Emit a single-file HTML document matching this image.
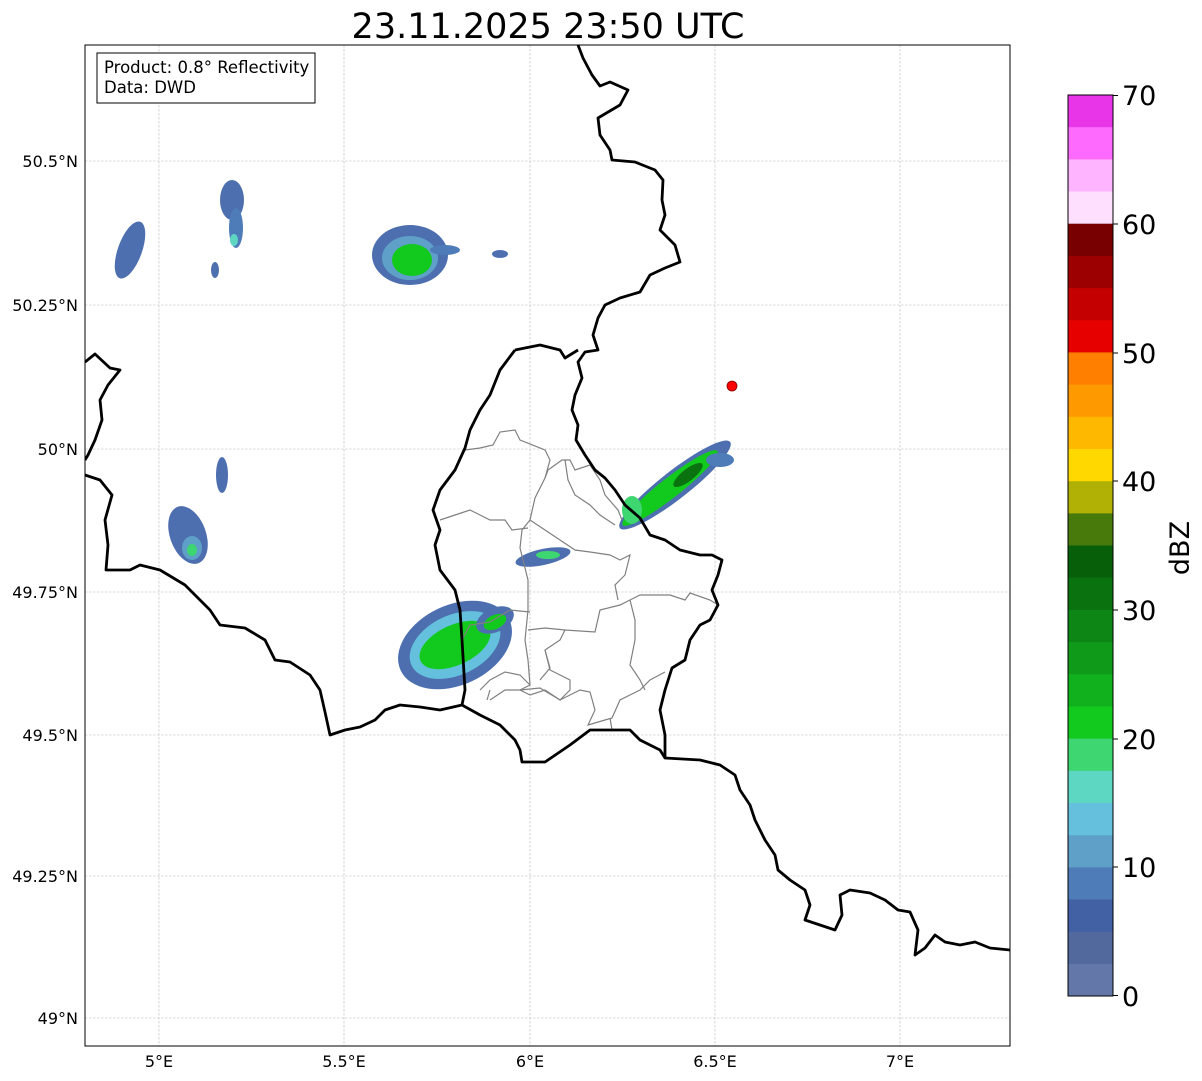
<!DOCTYPE html>
<html><head><meta charset="utf-8"><style>
body{margin:0;background:#fff;}
svg{display:block;font-family:"DejaVu Sans","Liberation Sans",sans-serif;}
</style></head><body>
<svg width="1202" height="1081" viewBox="0 0 1202 1081" xmlns="http://www.w3.org/2000/svg">
<rect width="1202" height="1081" fill="#fff"/>
<text x="548" y="38" font-size="35" text-anchor="middle" fill="#000">23.11.2025 23:50 UTC</text>
<defs><clipPath id="ax"><rect x="85" y="45" width="925" height="1001"/></clipPath></defs>
<g clip-path="url(#ax)">
<g stroke="#b8b8b8" stroke-width="0.6" stroke-dasharray="2.5,1.5" fill="none">
<line x1="159" y1="45" x2="159" y2="1046"/><line x1="344" y1="45" x2="344" y2="1046"/><line x1="530" y1="45" x2="530" y2="1046"/><line x1="715" y1="45" x2="715" y2="1046"/><line x1="900" y1="45" x2="900" y2="1046"/>
<line x1="85" y1="161" x2="1010" y2="161"/><line x1="85" y1="305" x2="1010" y2="305"/><line x1="85" y1="449" x2="1010" y2="449"/><line x1="85" y1="592" x2="1010" y2="592"/><line x1="85" y1="735" x2="1010" y2="735"/><line x1="85" y1="876" x2="1010" y2="876"/><line x1="85" y1="1018" x2="1010" y2="1018"/>
</g>
<g>
<ellipse cx="130" cy="250" rx="12" ry="30" fill="#4d6fb0" transform="rotate(20 130 250)"/>
<ellipse cx="232" cy="200" rx="12" ry="20" fill="#4d6fb0"/>
<ellipse cx="236" cy="228" rx="7" ry="20" fill="#4d7cb8"/><ellipse cx="234" cy="240" rx="4" ry="6" fill="#5dd6c2"/>
<ellipse cx="215" cy="270" rx="4" ry="8" fill="#4d6fb0"/>
<ellipse cx="410" cy="255" rx="38" ry="30" fill="#4d6fb0"/>
<ellipse cx="410" cy="258" rx="28" ry="22" fill="#5ea0c8"/>
<ellipse cx="412" cy="260" rx="20" ry="16" fill="#12c91d"/>
<ellipse cx="445" cy="250" rx="15" ry="5" fill="#4d7cb8"/><ellipse cx="500" cy="254" rx="8" ry="4" fill="#4d6fb0"/>
<ellipse cx="222" cy="475" rx="6" ry="18" fill="#4d6fb0"/>
<ellipse cx="188" cy="535" rx="18" ry="30" fill="#4d6fb0" transform="rotate(-20 188 535)"/>
<ellipse cx="192" cy="548" rx="10" ry="12" fill="#5ea0c8"/><ellipse cx="192" cy="550" rx="5" ry="6" fill="#3ed670"/>
<ellipse cx="455" cy="645" rx="60" ry="40" fill="#4d6fb0" transform="rotate(-25 455 645)"/>
<ellipse cx="455" cy="645" rx="48" ry="30" fill="#64c0dc" transform="rotate(-25 455 645)"/>
<ellipse cx="455" cy="645" rx="38" ry="20" fill="#12c91d" transform="rotate(-25 455 645)"/>
<ellipse cx="495" cy="620" rx="20" ry="12" fill="#4d6fb0" transform="rotate(-25 495 620)"/>
<ellipse cx="495" cy="622" rx="12" ry="7" fill="#12c91d" transform="rotate(-25 495 622)"/>
<ellipse cx="543" cy="557" rx="28" ry="8" fill="#4d6fb0" transform="rotate(-12 543 557)"/>
<ellipse cx="548" cy="555" rx="12" ry="4" fill="#3ed670"/>
<ellipse cx="675" cy="485" rx="70" ry="14" fill="#4d6fb0" transform="rotate(-38 675 485)"/>
<ellipse cx="670" cy="488" rx="60" ry="10" fill="#12c91d" transform="rotate(-38 670 488)"/>
<ellipse cx="688" cy="475" rx="18" ry="6" fill="#0a720f" transform="rotate(-38 688 475)"/>
<ellipse cx="720" cy="460" rx="14" ry="7" fill="#4d7cb8"/>
<ellipse cx="632" cy="510" rx="10" ry="14" fill="#3ed670"/>
</g>
<g stroke="#808080" stroke-width="1.2" fill="none">
<polyline points="465,450 480,448 493,445 500,432 515,430 520,440 545,450 550,460 545,478 535,498 530,520 522,530 520,548 528,580 528,610 525,640 528,660 530,685 520,690 530,695 545,690 560,700 570,690 570,680 550,670 545,650 560,640 565,630 595,632 600,610 620,605 630,600 640,595 670,595 685,600 690,593 710,600 718,605"/>
<polyline points="440,520 455,515 470,510 480,515 490,520 505,520 512,530 528,528"/>
<polyline points="530,520 545,530 560,540 575,550 590,552 610,555 620,560 630,555 625,575 615,585 618,600"/>
<polyline points="545,478 548,470 562,460 570,460 575,470 590,465 600,480 605,495 618,510 622,520"/>
<polyline points="565,460 568,480 575,495 590,505 600,515 615,525"/>
<polyline points="462,640 470,625 490,622 510,610 530,612"/>
<polyline points="480,690 490,680 505,672 520,675 530,685"/>
<polyline points="528,630 545,628 565,630"/>
<polyline points="487,700 490,690"/>
<polyline points="490,700 505,690 520,690 540,688 560,700 580,690 590,692 595,710 588,725 605,720 612,718 620,700 640,690 650,680 665,672"/>
<polyline points="545,650 550,668 540,680"/>
<polyline points="630,600 635,620 635,640 630,665 640,680 645,690"/>
<polyline points="610,718 612,730"/>
</g>
<g stroke="#000" stroke-width="2.8" fill="none" stroke-linejoin="round">
<polyline points="578,45 583,58 592,75 600,86 610,82 628,90 620,105 598,118 600,135 610,150 612,160 635,162 655,170 663,180 662,200 665,215 660,230 675,245 680,262 665,268 650,275 640,292 620,298 605,305 598,318 593,335 598,350 585,352 578,362 582,378 575,395 572,410 578,425 576,440 585,455 595,470 605,478 615,490 625,505 640,518 650,535 665,540 680,550 700,555 712,555 722,560 718,575 712,590 718,605 710,620 700,625 690,640 685,660 672,668 665,690 660,710 665,735 665,758"/>
<polyline points="515,350 540,345 560,350 565,358 578,350"/>
<polyline points="515,350 500,370 490,395 480,410 470,430 465,448 455,470 440,490 433,510 440,530 435,545 440,570 455,590 460,610 462,640 465,690 462,705"/>
<polyline points="462,705 480,715 500,725 515,740 520,750 522,762 545,762 570,745 590,730 630,730 640,740 660,750 665,758 700,760 720,765 735,775 740,790 750,805 755,820 765,840 775,855 778,870 790,880 805,890 810,905 805,920 820,925 835,930 842,915 840,895 850,890 870,893 885,900 898,910 910,912 918,930 915,955 925,948 935,935 945,942 960,945 975,942 990,948 1010,950"/>
<polyline points="85,475 100,480 112,495 105,520 108,545 106,570 130,570 140,565 160,570 185,585 200,600 210,610 220,625 245,628 265,640 275,660 290,662 310,675 320,690 325,712 330,735 345,730 360,727 375,720 385,710 400,705 420,707 440,710 462,705"/>
<polyline points="85,362 95,354 110,368 120,370 108,385 100,400 102,420 95,440 88,455 85,460"/>
</g>
<circle cx="732" cy="386" r="5" fill="#ff0000" stroke="#800000" stroke-width="0.8"/>
</g>
<rect x="85" y="45" width="925" height="1001" fill="none" stroke="#000" stroke-width="1"/>
<rect x="97" y="53" width="218" height="50" fill="#fff" stroke="#000" stroke-width="1"/>
<text x="104" y="73" font-size="16.5">Product: 0.8° Reflectivity</text>
<text x="104" y="93" font-size="16.5">Data: DWD</text>
<g font-size="16" text-anchor="end">
<text x="78" y="167">50.5°N</text><text x="78" y="311">50.25°N</text><text x="78" y="455">50°N</text><text x="78" y="598">49.75°N</text><text x="78" y="741">49.5°N</text><text x="78" y="882">49.25°N</text><text x="78" y="1024">49°N</text>
</g>
<g font-size="16" text-anchor="middle">
<text x="159" y="1067">5°E</text><text x="344" y="1067">5.5°E</text><text x="530" y="1067">6°E</text><text x="715" y="1067">6.5°E</text><text x="900" y="1067">7°E</text>
</g>
<g>
<rect x="1068" y="95" width="45" height="33" fill="#e835e8"/>
<rect x="1068" y="127.2" width="45" height="33" fill="#fd6afd"/>
<rect x="1068" y="159.4" width="45" height="33" fill="#feb4fe"/>
<rect x="1068" y="191.5" width="45" height="33" fill="#fedffe"/>
<rect x="1068" y="223.7" width="45" height="33" fill="#780000"/>
<rect x="1068" y="255.9" width="45" height="33" fill="#9d0000"/>
<rect x="1068" y="288.1" width="45" height="33" fill="#c40000"/>
<rect x="1068" y="320.3" width="45" height="33" fill="#e60000"/>
<rect x="1068" y="352.4" width="45" height="33" fill="#ff7f00"/>
<rect x="1068" y="384.6" width="45" height="33" fill="#ff9900"/>
<rect x="1068" y="416.8" width="45" height="33" fill="#ffb800"/>
<rect x="1068" y="449" width="45" height="33" fill="#ffd800"/>
<rect x="1068" y="481.2" width="45" height="33" fill="#b0b005"/>
<rect x="1068" y="513.4" width="45" height="33" fill="#477a0b"/>
<rect x="1068" y="545.5" width="45" height="33" fill="#075f0a"/>
<rect x="1068" y="577.7" width="45" height="33" fill="#0a720f"/>
<rect x="1068" y="609.9" width="45" height="33" fill="#0d8615"/>
<rect x="1068" y="642.1" width="45" height="33" fill="#0f9a19"/>
<rect x="1068" y="674.3" width="45" height="33" fill="#10b11d"/>
<rect x="1068" y="706.4" width="45" height="33" fill="#12c91d"/>
<rect x="1068" y="738.6" width="45" height="33" fill="#3ed670"/>
<rect x="1068" y="770.8" width="45" height="33" fill="#5dd6c2"/>
<rect x="1068" y="803" width="45" height="33" fill="#64c0dc"/>
<rect x="1068" y="835.2" width="45" height="33" fill="#5ea0c8"/>
<rect x="1068" y="867.4" width="45" height="33" fill="#4d7cb8"/>
<rect x="1068" y="899.5" width="45" height="33" fill="#4260a4"/>
<rect x="1068" y="931.7" width="45" height="33" fill="#52699e"/>
<rect x="1068" y="963.9" width="45" height="32.1" fill="#6377a8"/>
<rect x="1068" y="95" width="45" height="901" fill="none" stroke="#000" stroke-width="1"/>
<g stroke="#000" stroke-width="1"><line x1="1113" y1="95.5" x2="1118" y2="95.5"/><line x1="1113" y1="224" x2="1118" y2="224"/><line x1="1113" y1="353" x2="1118" y2="353"/><line x1="1113" y1="481" x2="1118" y2="481"/><line x1="1113" y1="610" x2="1118" y2="610"/><line x1="1113" y1="739" x2="1118" y2="739"/><line x1="1113" y1="867" x2="1118" y2="867"/><line x1="1113" y1="995.5" x2="1118" y2="995.5"/></g>
<g font-size="27"><text x="1122" y="105">70</text><text x="1122" y="234">60</text><text x="1122" y="363">50</text><text x="1122" y="491">40</text><text x="1122" y="620">30</text><text x="1122" y="749">20</text><text x="1122" y="877">10</text><text x="1122" y="1006">0</text></g>
<text x="0" y="0" font-size="27" text-anchor="middle" transform="translate(1189 548) rotate(-90)">dBZ</text>
</g>
</svg>
</body></html>
